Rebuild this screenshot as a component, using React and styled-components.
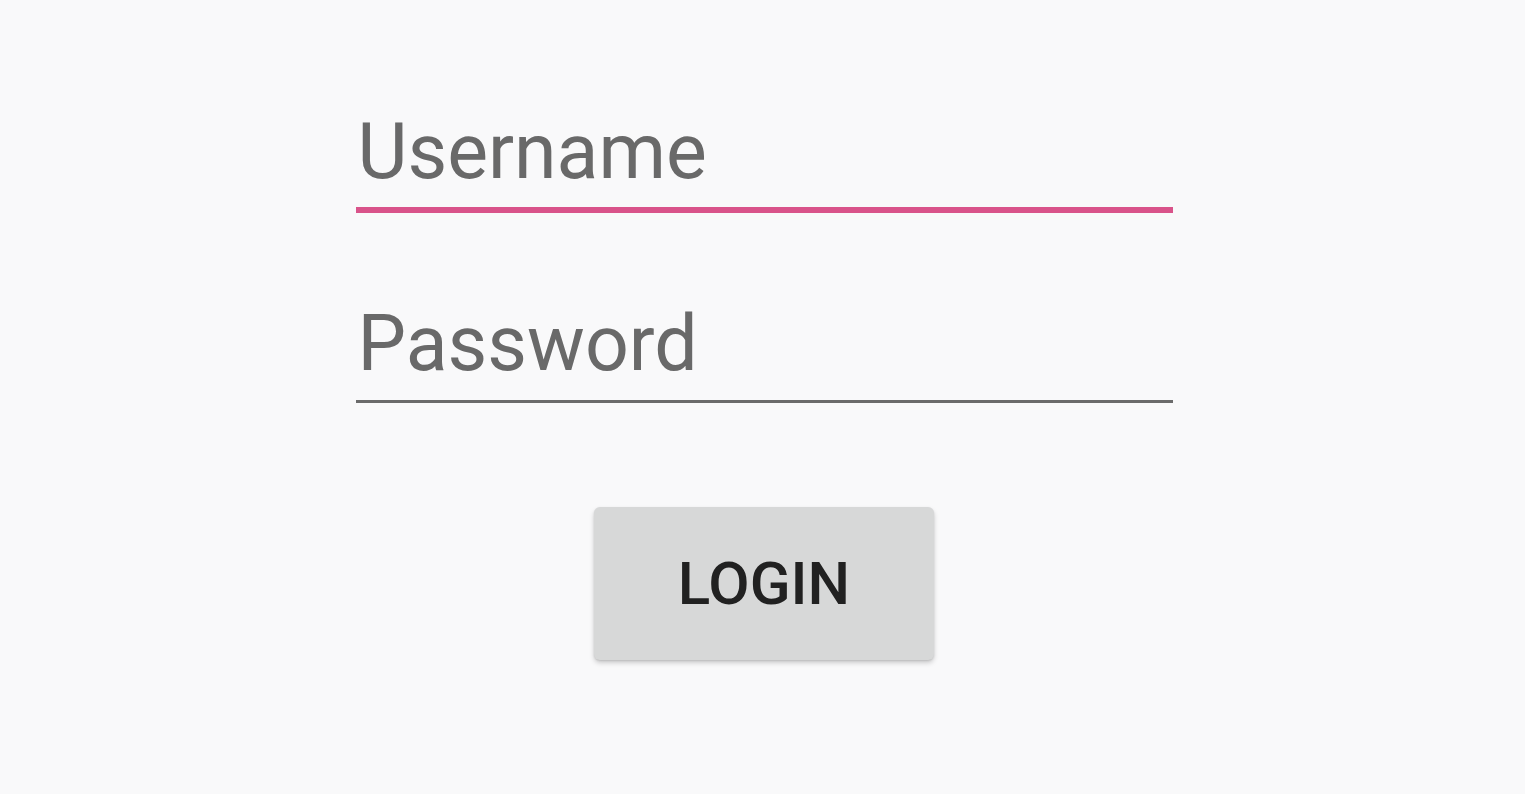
import React from "react";
import styled, { createGlobalStyle } from "styled-components";

const GlobalStyle = createGlobalStyle`
  body {
    margin: 0;
    background: #f9f9fa;
    font-family: Roboto, "Liberation Sans", sans-serif;
  }
`;

const Page = styled.div`
  min-height: 794px;
  display: flex;
  justify-content: center;
  padding-top: 104px;
  padding-left: 3px;
  box-sizing: border-box;
`;

const Form = styled.form`
  width: 817px;
  display: flex;
  flex-direction: column;
`;

const Field = styled.div`
  padding-bottom: ${(p) => (p.focused ? "7px" : "8px")};
  border-bottom: ${(p) => (p.focused ? "6px solid #d9538a" : "3px solid #6b6b6b")};
  margin-bottom: ${(p) => p.gap || 0}px;
`;

const Input = styled.input`
  display: block;
  width: 100%;
  height: 96px;
  padding: 0 0 0 2px;
  margin: 0;
  border: none;
  outline: none;
  background: transparent;
  font-family: Roboto, "Liberation Sans", sans-serif;
  font-size: 77px;
  color: #222;
  &::placeholder {
    color: #696969;
  }
`;

const ButtonRow = styled.div`
  display: flex;
  justify-content: center;
  margin-top: 104px;
`;

const Button = styled.button`
  width: 340px;
  height: 153px;
  border: none;
  border-radius: 6px;
  background: #d7d8d8;
  box-shadow: 0 3px 5px rgba(0, 0, 0, 0.18), 0 1px 2px rgba(0, 0, 0, 0.1);
  font-family: Roboto, "Liberation Sans", sans-serif;
  font-size: 60px;
  font-weight: 500;
  color: #212121;
  cursor: pointer;
`;

const App = () => {
  return (
    <Page>
      <GlobalStyle />
      <Form onSubmit={(e) => e.preventDefault()}>
        <Field focused gap={83}>
          <Input placeholder="Username" />
        </Field>
        <Field>
          <Input type="password" placeholder="Password" />
        </Field>
        <ButtonRow>
          <Button type="submit">LOGIN</Button>
        </ButtonRow>
      </Form>
    </Page>
  );
};

export default App;
